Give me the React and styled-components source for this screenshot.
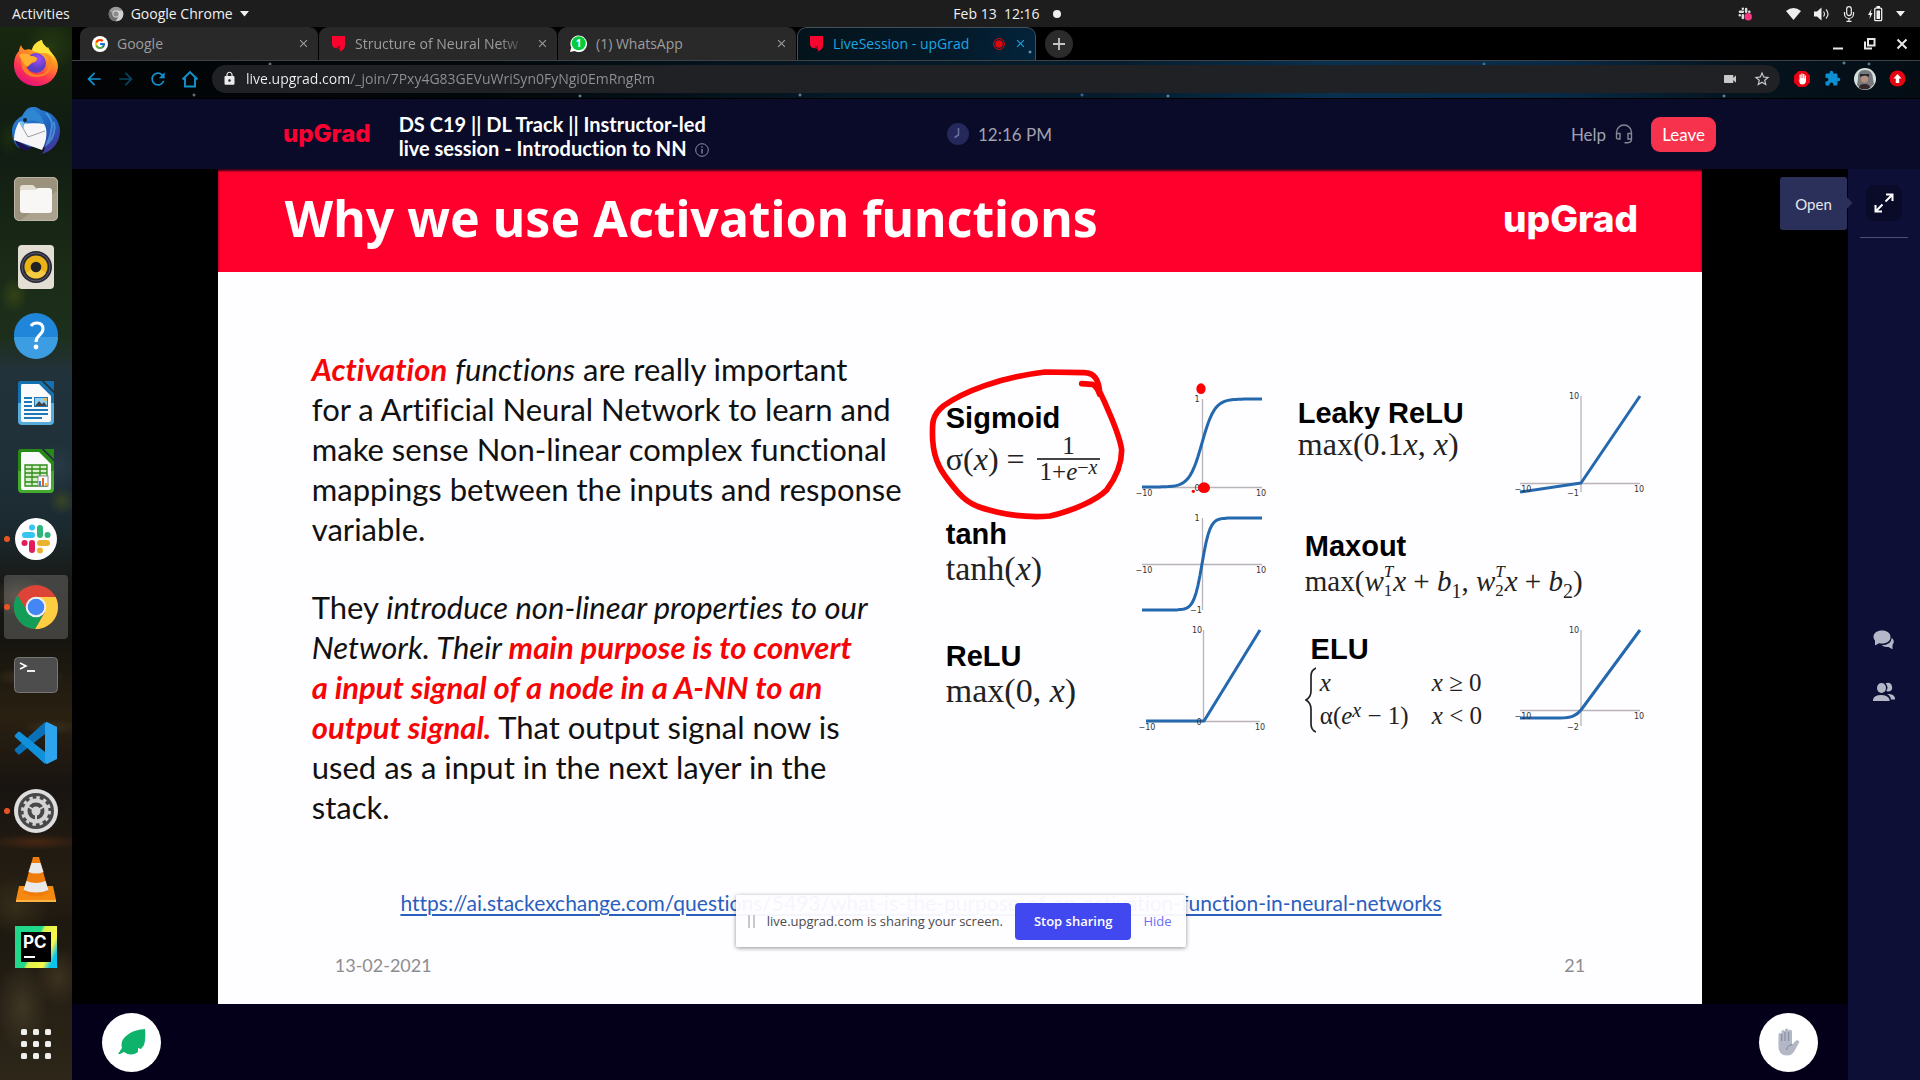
import React from "react";
import styled, { createGlobalStyle, css } from "styled-components";
import { FcGoogle } from "react-icons/fc";
import {
  MdArrowBack,
  MdArrowForward,
  MdRefresh,
  MdLock,
  MdVideocam,
  MdStarBorder,
  MdExtension,
  MdClose,
} from "react-icons/md";

const ui = `"Open Sans", "Noto Sans", sans-serif`;
const lato = `Lato, "Open Sans", sans-serif`;

const Global = createGlobalStyle`
  *, *::before, *::after { box-sizing: border-box; }
  html, body, #root { height: 100%; }
  body { margin: 0; background: #000; font-family: ${ui}; font-variant-ligatures: none; overflow: hidden; }
  button { font: inherit; color: inherit; background: none; border: 0; padding: 0; }
  svg { display: block; flex: none; }
  p, h1, h2, h3 { margin: 0; }
`;

const Desktop = styled.div`
  display: grid;
  grid-template-rows: 27px minmax(0, 1fr);
  grid-template-columns: 72px minmax(0, 1fr);
  height: 100vh;
`;

/* ---------- GNOME top bar ---------- */
const TopBar = styled.header`
  grid-column: 1 / -1;
  display: grid;
  grid-template-columns: 1fr auto 1fr;
  align-items: center;
  background: #1d1d1d;
  color: #f0f0f0;
  font-size: 14px;
  line-height: 20px;
`;
const TopLeft = styled.div`
  display: flex;
  align-items: center;
  padding-left: 12px;
  gap: 38px;
`;
const TopItem = styled.button`
  display: flex;
  align-items: center;
  gap: 7px;
`;
const TopRight = styled.div`
  display: flex;
  align-items: center;
  justify-content: flex-end;
  gap: 13px;
  padding-right: 15px;
`;
const Clock = styled.button`
  display: flex;
  align-items: center;
  gap: 13px;
  padding-left: 94px;
  white-space: pre;
`;
const Dot = styled.span`
  width: 8px;
  height: 8px;
  border-radius: 50%;
  background: #f0f0f0;
`;

/* ---------- Dock ---------- */
const DockNav = styled.nav`
  display: flex;
  flex-direction: column;
  align-items: center;
  gap: 4px;
  padding: 4px;
  background:
    radial-gradient(ellipse 16px 20px at 10px 110px, #22380f99, transparent),
    radial-gradient(ellipse 26px 26px at 50px 20px, #2c4313aa, transparent),
    radial-gradient(ellipse 14px 18px at 14px 268px, #4a5a1280, transparent),
    radial-gradient(ellipse 14px 14px at 62px 474px, #4c561a90, transparent),
    radial-gradient(ellipse 22px 26px at 58px 440px, #33475866, transparent),
    radial-gradient(ellipse 30px 20px at 20px 570px, #5c4a3890, transparent),
    radial-gradient(ellipse 36px 10px at 30px 650px, #5a482a88, transparent),
    radial-gradient(ellipse 30px 8px at 52px 700px, #4d3f2588, transparent),
    radial-gradient(ellipse 50px 8px at 36px 815px, #5a2e12aa, transparent),
    radial-gradient(ellipse 34px 30px at 16px 880px, #40361faa, transparent),
    radial-gradient(ellipse 26px 46px at 22px 980px, #4b422caa, transparent),
    radial-gradient(ellipse 24px 30px at 58px 950px, #4b3d26aa, transparent),
    linear-gradient(#18280f 0, #101b12 110px, #1a2a16 230px, #1d2f1c 310px, #22323a 345px,
      #203039 440px, #1b2a30 500px, #191b18 550px, #15140f 610px, #292011 690px,
      #181411 760px, #261e12 860px, #1d1810 900px, #2d2619 100%);
`;
const DockItem = styled.button`
  position: relative;
  display: grid;
  place-items: center;
  width: 64px;
  height: 64px;
  border-radius: 4px;
  ${(p) => p.$active && css`background: #ffffff30;`}
  ${(p) => p.$last && css`margin-top: auto;`}
  ${(p) =>
    p.$running &&
    css`
      &::before {
        content: "";
        position: absolute;
        left: 0;
        top: 29px;
        width: 6px;
        height: 6px;
        border-radius: 50%;
        background: #e95420;
      }
    `}
`;

/* ---------- Browser chrome ---------- */
const Browser = styled.div`
  display: grid;
  grid-template-rows: 33px 39px minmax(0, 1fr);
  min-width: 0;
  min-height: 0;
`;
const sky = css`
  background:
    radial-gradient(circle 2px at 198px 3px, #8fb0b0, transparent),
    radial-gradient(circle 2px at 122px 34px, #8fa8a8, transparent),
    radial-gradient(circle 2px at 508px 35px, #8fb8c0, transparent),
    radial-gradient(circle 2px at 728px 34px, #8fb8d8, transparent),
    radial-gradient(circle 2px at 1096px 35px, #7fc0f0, transparent),
    radial-gradient(circle 2px at 1010px 34px, #4f90d0, transparent),
    radial-gradient(circle 2px at 1412px 3px, #3fa0d0, transparent),
    radial-gradient(circle 2px at 1652px 35px, #7fc0d0, transparent),
    radial-gradient(circle 2px at 1772px 2px, #7fc0d0, transparent),
    radial-gradient(circle 2px at 1797px 3px, #7fb0c0, transparent),
    linear-gradient(90deg, #020405 0, #03080b 420px, #051a28 800px, #061c2c 1040px, #08304f 1260px,
      #082a47 1480px, #05141f 1660px, #040d14 100%);
`;
const TabStrip = styled.div`
  display: flex;
  align-items: stretch;
  padding-left: 8px;
  background: #000;
`;
const Tab = styled.div`
  display: flex;
  align-items: center;
  width: 239px;
  padding: 0 9px 0 12px;
  gap: 9px;
  font-size: 14px;
  line-height: 20px;
  color: #9d9d9d;
  border-radius: 9px 9px 0 0;
  background: #292929;
  box-shadow: inset -1px 0 #000;
  ${(p) =>
    p.$active &&
    css`
      color: #18a8e4;
      background: radial-gradient(circle 2px at 233px 25px, #8fd0e8, transparent),
        linear-gradient(100deg, #04141c, #041827 60%, #03243c);
      box-shadow: inset 0 1px #46505a, inset -1px 0 #46505a, inset 1px 0 #46505a;
    `}
`;
const TabTitle = styled.span`
  flex: 1;
  min-width: 0;
  white-space: nowrap;
  ${(p) => p.$fade && css`mask-image: linear-gradient(90deg, #000 84%, transparent);`}
`;
const NewTab = styled.button`
  align-self: center;
  display: grid;
  place-items: center;
  width: 28px;
  height: 28px;
  margin-left: 9px;
  border-radius: 50%;
  background: #2b2b2b;
  color: #c4c4c4;
`;
const WindowButtons = styled.div`
  display: flex;
  align-items: center;
  gap: 20px;
  margin-left: auto;
  padding-right: 12px;
  color: #e8e8e8;
`;
const Toolbar = styled.div`
  display: flex;
  align-items: center;
  padding: 0 14px 2px 12px;
  ${sky}
  border-top: 1px solid #3d4347;
  border-bottom: 1px solid #000;
`;
const NavButtons = styled.div`
  display: flex;
  gap: 12px;
  margin-right: 12px;
  color: #1192d0;
`;
const NavButton = styled.button`
  opacity: ${(p) => (p.disabled ? 0.45 : 1)};
  color: inherit;
`;
const Omnibox = styled.form`
  display: flex;
  align-items: center;
  flex: 1;
  height: 28px;
  padding: 0 9px 0 10px;
  gap: 9px;
  border-radius: 14px;
  background: #202124;
  color: #c8c8c8;
`;
const UrlInput = styled.input`
  flex: 1;
  min-width: 0;
  padding: 0;
  border: 0;
  outline: 0;
  font-family: ${ui};
  font-size: 14px;
  line-height: 20px;
  color: transparent;
  background: linear-gradient(90deg, #f2f2f2 105px, #8f9194 105px);
  background-clip: text;
`;
const OmniActions = styled.div`
  display: flex;
  gap: 15px;
`;
const Extensions = styled.div`
  display: flex;
  align-items: center;
  gap: 13px;
  margin-left: 13px;
`;
const IconButton = styled.button`
  display: grid;
  place-items: center;
`;

/* ---------- Live session page ---------- */
const Page = styled.div`
  display: grid;
  grid-template-rows: 70px minmax(0, 1fr) 76px;
  grid-template-columns: minmax(0, 1fr) 72px;
  min-height: 0;
  background: #000;
`;
const SessionHeader = styled.header`
  grid-column: 1 / -1;
  display: grid;
  grid-template-columns: 1fr auto 1fr;
  align-items: center;
  padding: 0 204px 0 211px;
  background: #090b29;
  font-family: ${lato};
  color: #a0a1b0;
  font-size: 17px;
`;
const Brand = styled.div`
  display: flex;
  align-items: center;
  gap: 28px;
`;
const Logo = styled.span`
  font-family: Inter, ${ui};
  font-weight: 800;
  font-size: ${(p) => p.$size}px;
  line-height: 1;
  color: ${(p) => p.$color};
`;
const SessionTitle = styled.h1`
  padding-top: 3px;
  font-size: 20px;
  line-height: 24px;
  font-weight: 700;
  color: #fff;
  white-space: nowrap;
  svg { display: inline-block; margin-left: 8px; vertical-align: -1px; }
`;
const TimeBox = styled.div`
  display: flex;
  align-items: center;
  gap: 9px;
`;
const HeaderActions = styled.div`
  display: flex;
  justify-content: flex-end;
  align-items: center;
  gap: 18px;
`;
const HelpButton = styled.button`
  display: flex;
  align-items: center;
  gap: 9px;
`;
const LeaveButton = styled.button`
  height: 35px;
  padding: 0 11px;
  border-radius: 9px;
  background: #f7324c;
  color: #fff;
`;
const Stage = styled.main`
  position: relative;
  display: flex;
  justify-content: center;
  background: #000;
  min-height: 0;
`;
const SideRail = styled.aside`
  grid-row: 2 / 4;
  grid-column: 2;
  display: flex;
  flex-direction: column;
  align-items: center;
  padding-top: 16px;
  background: #0e0f36;
`;
const ExpandButton = styled.button`
  display: grid;
  place-items: center;
  width: 36px;
  height: 36px;
  border-radius: 8px;
  background: #090b29;
`;
const RailRule = styled.hr`
  width: 48px;
  height: 1px;
  margin: 16px 0 0;
  border: 0;
  background: #4c4f78;
`;
const RailTools = styled.div`
  display: flex;
  flex-direction: column;
  gap: 32px;
  margin: auto 0;
  padding-top: 14px;
  color: #b4b7c7;
`;
const Tooltip = styled.div`
  position: absolute;
  right: 1px;
  top: 8px;
  display: grid;
  place-items: center;
  width: 67px;
  height: 53px;
  border-radius: 3px;
  background: #2b305b;
  color: #e4e5ee;
  font-family: ${lato};
  font-size: 15px;
  &::after {
    content: "";
    position: absolute;
    right: -4px;
    top: 22px;
    width: 8px;
    height: 8px;
    background: #2b305b;
    transform: rotate(45deg);
  }
`;
const Footer = styled.footer`
  display: flex;
  align-items: center;
  justify-content: space-between;
  padding: 0 30px;
  background: #05001a;
`;
const RoundButton = styled.button`
  display: grid;
  place-items: center;
  width: 59px;
  height: 59px;
  border-radius: 50%;
  background: #fff;
`;

/* ---------- Shared slide ---------- */
const Slide = styled.article`
  position: relative;
  display: flex;
  flex-direction: column;
  height: 100%;
  aspect-ratio: 16 / 9;
  background: #fefdff;
  color: #111;
  font-family: ${lato};
`;
const SlideHead = styled.div`
  display: flex;
  align-items: center;
  justify-content: space-between;
  height: 103px;
  padding: 0 64px 5px 67px;
  background: #ff002d;
  box-shadow: inset 0 2px 2px #3c0016;
`;
const SlideTitle = styled.h2`
  font-family: "Noto Sans", sans-serif;
  font-size: 50px;
  line-height: 60px;
  color: #fff;
`;
const SlideBody = styled.div`
  display: grid;
  grid-template-columns: 634px 1fr;
  padding: 77px 0 0 94px;
  height: 616px;
`;
const Copy = styled.div`
  display: flex;
  flex-direction: column;
  gap: 38px;
  font-size: 31px;
  line-height: 40px;
  white-space: nowrap;
`;
const Key = styled.strong`
  font-style: italic;
  color: #f50505;
`;
const Functions = styled.div`
  position: relative;
  display: grid;
  grid-template-columns: 184px 168px 210px 145px;
  grid-template-rows: 120px 115px 120px;
  margin-top: 36px;
`;
const Fn = styled.section`
  padding-top: ${(p) => p.$top}px;
  padding-left: ${(p) => p.$indent || 0}px;
  grid-column: span ${(p) => p.$span || 1};
  white-space: nowrap;
`;
const FnName = styled.h3`
  font-family: "Liberation Sans", sans-serif;
  font-size: 29px;
  line-height: 32px;
  color: #000;
`;
const Formula = styled.div`
  display: flex;
  align-items: center;
  font-family: "Liberation Serif", serif;
  font-size: ${(p) => p.$size || 32}px;
  line-height: ${(p) => p.$line || 36}px;
  color: #222;
  white-space: pre;
  sub { font-size: 20px; line-height: 0; }
`;
const Fraction = styled.span`
  display: grid;
  justify-items: center;
  margin-left: 12px;
  font-size: 25px;
  line-height: 24px;
  > :first-child { justify-self: stretch; text-align: center; border-bottom: 2px solid #444; }
  > :last-child { padding: 0 3px; }
  sup { font-size: 20px; line-height: 0; vertical-align: 6px; }
`;
const Scripts = styled.span`
  display: inline-grid;
  font-size: 17px;
  line-height: 19px;
`;
const Cases = styled.div`
  display: grid;
  grid-template-columns: 15px 112px auto;
  padding-top: 2px;
  font-family: "Liberation Serif", serif;
  font-size: 25px;
  line-height: 31px;
  color: #222;
  svg { grid-row: 1 / 3; }
  sup { font-size: 20px; line-height: 0; vertical-align: 7px; }
`;
const Ink = styled.svg`
  position: absolute;
  left: -46px;
  top: -45px;
`;
const SourceLink = styled.a`
  align-self: center;
  margin-right: 78px;
  font-size: 21px;
  line-height: 30px;
  color: #2a5fbd;
  white-space: nowrap;
  text-decoration: underline;
  text-decoration-thickness: 2px;
  text-underline-offset: 3px;
`;
const SlideFoot = styled.div`
  display: flex;
  justify-content: space-between;
  margin-top: auto;
  padding: 0 117px 24px;
  font-size: 18px;
  line-height: 30px;
  color: #8d8d8f;
`;
const ShareBar = styled.div`
  position: absolute;
  left: 518px;
  bottom: 57px;
  display: flex;
  align-items: center;
  height: 52px;
  padding: 0 14px 0 12px;
  gap: 12px;
  border-radius: 2px;
  background: #fefdfff4;
  box-shadow: 0 1px 4px #00000070;
  font-family: ${ui};
  font-size: 13px;
  color: #4a4a4c;
  white-space: nowrap;
`;
const Grip = styled.span`
  width: 7px;
  height: 13px;
  border: solid #c8c8cc;
  border-width: 0 2px;
`;
const StopButton = styled.button`
  height: 37px;
  padding: 0 19px;
  border-radius: 4px;
  background: #4248f0;
  color: #fff;
  font-weight: 600;
`;
const HideButton = styled.button`
  color: #6c6ff2;
`;

const axis = { stroke: "#b9b4b9", strokeWidth: 1.3, fill: "none" };
const curve = { stroke: "#2468ad", strokeWidth: 3, fill: "none", strokeLinejoin: "round" };

function Chart({ height = 120, axes, line, ticks }) {
  return (
    <svg width="145" height={height} viewBox={`0 0 145 ${height}`} aria-hidden="true">
      <path d={axes} {...axis} />
      <path d={line} {...curve} />
      {ticks.map(([x, y, t]) => (
        <text key={`${x}-${y}`} x={x} y={y} fontSize="8" textAnchor="middle" fill="#333" fontFamily="DejaVu Sans">
          {t}
        </text>
      ))}
    </svg>
  );
}

const sample = (fn, x0, x1, mid) => {
  const pts = [];
  for (let i = 0; i <= 60; i++) {
    const x = -10 + i / 3;
    pts.push(`${(x0 + ((x1 - x0) * i) / 60).toFixed(1)} ${(mid - fn(x)).toFixed(1)}`);
  }
  return "M" + pts.join("L");
};
const sigmoidLine = sample((x) => 88 / (1 + Math.exp(-x * 0.95)), 12, 132, 102);
const tanhLine = sample((x) => 46 * Math.tanh(x * 0.75), 12, 132, 59);

/* ---------- Dock icons ---------- */
const Svg48 = (p) => <svg width="48" height="48" viewBox="0 0 48 48" aria-hidden="true">{p.children}</svg>;

const Firefox = () => (
  <Svg48>
    <defs>
      <linearGradient id="ff1" x1=".8" y1="0" x2=".3" y2="1">
        <stop offset="0" stopColor="#fff44f" /><stop offset=".35" stopColor="#ff9a1f" />
        <stop offset=".7" stopColor="#ff3750" /><stop offset="1" stopColor="#e3107a" />
      </linearGradient>
      <radialGradient id="ff2" cx=".6" cy=".3"><stop offset="0" stopColor="#a34bf5" /><stop offset="1" stopColor="#5a3fc4" /></radialGradient>
    </defs>
    <path d="M9 6c1 3 2 4 4 5 2-1 5-1 7 0 2-6 6-9 10-10 0 4 2 6 5 8l1-1c2 3 2 5 2 6 5 2 8 8 8 14-1 11-10 19-22 19S2 38 2 26C2 18 5 14 7 12c0-2 1-4 2-6z" fill="url(#ff1)" />
    <circle cx="24" cy="24" r="10" fill="url(#ff2)" />
    <path d="M9 18c3-2 9-1 11 1 1 1 4 1 5 2-1 3-4 2-6 4-2 1-2 3-5 3 3 6 9 9 16 7 5-2 8-7 7-13-1-5-4-7-8-8 5 0 10 3 11 9 1 9-6 15-16 15S8 31 9 18z" fill="#ff8a1c" opacity=".85" />
    <path d="M20 11c1-6 6-9 10-10 0 6 10 9 13 19-4-5-7-6-12-6s-7 0-11-3z" fill="#ffe23c" />
    <path d="M7 16c3-2 8-2 12 1 3 0 6 1 6 3-1 3-4 2-6 4-1 1-2 3-5 3-3-3-5-7-7-11z" fill="#ffb02e" />
  </Svg48>
);
const Thunderbird = () => (
  <Svg48>
    <defs><linearGradient id="tb" x2=".6" y2="1"><stop stopColor="#2f8fdd" /><stop offset=".6" stopColor="#1f62bd" /><stop offset="1" stopColor="#3d3aa0" /></linearGradient></defs>
    <path d="M10 9C13 4 15 0 21 0c5 0 6 2 8 3 11 2 18 9 19 20 0 12-7 21-18 24 3-4 3-6 2-8L7 41C2 37 0 31 0 24 0 18 3 13 10 9z" fill="url(#tb)" />
    <path d="M3 33l16 8c-2 3-8 4-12-1-2-2-3-4-4-7z" fill="#1c1250" />
    <path d="M7 15c5 3 18 0 25 2 4 5 3 17-2 26L2 33c0-7 2-13 5-18z" fill="#f6f6f8" />
    <path d="M8 16l8 14 17-6" fill="none" stroke="#9c9ca4" />
    <path d="M9 16c0-6 4-12 11-14 7 4 11 8 12 15-8-4-15-5-19-1-1 1-1 3-3 4z" fill="#2f86d3" />
    <path d="M8 14c0 3 1 6 4 7 0-2-1-4 0-6z" fill="#7cc4ee" />
    <circle cx="13" cy="13" r="2" fill="#123" />
    <path d="M34 6c6 5 7 12 5 19-1 5-3 9-4 12 6-5 9-14 7-22" fill="none" stroke="#58b2ee" strokeWidth="2" opacity=".6" />
  </Svg48>
);
const Files = () => (
  <Svg48>
    <rect x="2" y="2" width="44" height="44" rx="5" fill="#9b927e" />
    <path d="M46 15v26a5 5 0 0 1-5 5H8z" fill="#aaa18e" />
    <rect x="2.5" y="2.5" width="43" height="43" rx="5" fill="none" stroke="#bcb5a6" />
    <path d="M8 13q0-3 3-3h10l4 4h12v5H8z" fill="#e4dfd3" />
    <path d="M8 17q0-2 2-2h13l3-2h11q3 0 3 3v19q0 3-3 3H11q-3 0-3-3z" fill="#f8f7f5" />
  </Svg48>
);
const Music = () => (
  <Svg48>
    <rect x="6" y="2" width="36" height="44" rx="4" fill="#e3ded4" />
    <circle cx="24" cy="24" r="16" fill="#2a2a36" />
    <circle cx="24" cy="24" r="14" fill="none" stroke="#5d5b6c" />
    <circle cx="24" cy="24" r="11.5" fill="#eab417" />
    <path d="M14 30a12 12 0 0 0 20 0l-10-6z" fill="#f6cf4f" opacity=".8" />
    <circle cx="24" cy="24" r="5.3" fill="#222" />
  </Svg48>
);
const HelpIcon = () => (
  <Svg48>
    <circle cx="24" cy="24" r="22" fill="#1f86da" />
    <path d="M2 26h44a22 22 0 0 1-44 0z" fill="#3d9de2" />
    <path d="M19 15c1-2 3-3 6-3 4 0 6 2 6 6 0 6-7 6-7 13" fill="none" stroke="#fff" strokeWidth="3" />
    <circle cx="24" cy="36" r="2.4" fill="#fff" />
  </Svg48>
);
const Doc = ({ dark, light, children }) => (
  <Svg48>
    <path d="M10 2h19l13 13v27a4 4 0 0 1-4 4H10a4 4 0 0 1-4-4V6a4 4 0 0 1 4-4z" fill={light} />
    <path d="M10 2h19l13 13v9H6V6a4 4 0 0 1 4-4z" fill={dark} />
    <path d="M10 5h17l12 12v24q0 2-2 2H11q-2 0-2-2V7q0-2 1-2z" fill="#fafafa" />
    <path d="M32 2h10v10z" fill={dark} />
    {children}
  </Svg48>
);
const Writer = () => (
  <Doc dark="#1470ae" light="#58acdc">
    <path d="M12 19h8M12 23h8M12 27h8M12 31h24M12 35h24M12 39h18" stroke="#1d78b8" strokeWidth="1.8" />
    <rect x="22" y="18" width="14" height="10" fill="#1d78b8" />
    <rect x="23" y="19" width="12" height="8" fill="#8fd0f0" />
    <path d="M23 27l4-5 3 3 2-2 3 4z" fill="#444" />
    <circle cx="33.500" cy="20.500" r="1.500" fill="#f5b52a" />
  </Doc>
);
const Calc = () => (
  <Doc dark="#288a16" light="#43ac2e">
    <rect x="13" y="18" width="22" height="21" fill="#d8f0c8" />
    <path d="M13 18h22v21H13zM20 18v21M28 18v21M13 22h22M13 26h22M13 30h22M13 35h22" fill="none" stroke="#2e8b1c" strokeWidth="1.3" />
    <rect x="26" y="29" width="10" height="10" fill="#fff" stroke="#888" />
    <path d="M28 39v-5" stroke="#2e8fd0" strokeWidth="2" /><path d="M31 39v-8" stroke="#e0642a" strokeWidth="2" />
    <path d="M34 39v-3" stroke="#f0b52a" strokeWidth="2" />
  </Doc>
);
const slackShape = (
  <g strokeWidth="6" strokeLinecap="round" fill="none">
    <path d="M13 20h7" stroke="#36c5f0" /><path d="M28 13v7" stroke="#2eb67d" />
    <path d="M28 28h7" stroke="#ecb22e" /><path d="M20 28v7" stroke="#e01e5a" />
    <path d="M20 12.500v.1" stroke="#36c5f0" /><path d="M35.500 20h.1" stroke="#2eb67d" />
    <path d="M28 35.500v.1" stroke="#ecb22e" /><path d="M12.500 28h.1" stroke="#e01e5a" />
  </g>
);
const Slack = () => (
  <Svg48><circle cx="24" cy="24" r="21" fill="#fff" />{slackShape}</Svg48>
);
const ChromeIcon = ({ size = 48, grey }) => {
  const c = grey ? ["#9a9a9a", "#d0d0d0", "#707070", "#8c8c8c", "#eee"] : ["#dd4437", "#fecd41", "#129d58", "#4486f4", "#f1f1f1"];
  return (
    <svg width={size} height={size} viewBox="0 0 48 48" aria-hidden="true">
      <circle cx="24" cy="24" r="22" fill={c[0]} />
      <path d="M24 14h19.600A22 22 0 0 1 23 46l10-17z" fill={c[1]} />
      <path d="M5.500 12A22 22 0 0 0 23 46l9.500-16.500-17-1z" fill={c[2]} />
      <circle cx="24" cy="24" r="10.300" fill={c[4]} />
      <circle cx="24" cy="24" r="8.300" fill={c[3]} />
    </svg>
  );
};
const Terminal = () => (
  <Svg48>
    <rect x="2.500" y="6.500" width="43" height="35" rx="4" fill="#4d4d4d" stroke="#777" />
    <path d="M8 12l6 3-6 3" fill="none" stroke="#fff" strokeWidth="1.600" /><path d="M15 20h8" stroke="#fff" strokeWidth="1.800" />
  </Svg48>
);
const Code = () => (
  <Svg48>
    <path d="M3 32q-1-1 0-2L33 3v12L8 35q-1 1-2 0z" fill="#0a71b8" />
    <path d="M3 16q-1 1 0 2l30 27V33L8 13q-1-1-2 0z" fill="#1190db" />
    <path d="M35 3l10 5v32l-10 5q-2 0-2-2V5q0-2 2-2z" fill="#2ea3ee" />
  </Svg48>
);
const Settings = () => (
  <Svg48>
    <circle cx="24" cy="24" r="22" fill="#dedede" /><circle cx="24" cy="24" r="18" fill="#484848" />
    <circle cx="24" cy="24" r="13.500" fill="none" stroke="#d4d4d4" strokeWidth="3" strokeDasharray="3.400 3.670" />
    <circle cx="24" cy="24" r="10.500" fill="none" stroke="#d4d4d4" strokeWidth="4" />
    <path d="M24 24V34M24 24l9-5M24 24l-9-5" stroke="#d4d4d4" strokeWidth="2" /><circle cx="24" cy="24" r="4.500" fill="#d4d4d4" />
  </Svg48>
);
const Vlc = () => (
  <Svg48>
    <path d="M7 31h34l3 14v2H4v-2z" fill="#f68a10" /><path d="M4 45h40v2H4z" fill="#ffb347" />
    <path d="M21 2h6l10 36q-13 7-26 0z" fill="#ef7d0c" />
    <path d="M19.500 8h9l3 9q-7 3-15 0z" fill="#e9e9e9" /><path d="M14.500 26q9 4 19 0l3 9q-12 5-25 0z" fill="#e9e9e9" />
  </Svg48>
);
const PcFrame = styled.div`
  width: 42px;
  height: 42px;
  padding: 6px;
  background: linear-gradient(115deg, #21d789 45%, #d9f24a 50%, #fcf84a 75%, #07c3f2 88%);
`;
const PcInner = styled.div`
  height: 30px;
  padding-left: 2px;
  text-align: left;
  background: linear-gradient(#fff, #fff) 3px 24px / 11px 2px no-repeat #000;
  color: #fff;
  font: 700 17px/20px Inter, sans-serif;
`;
const Apps = () => (
  <Svg48>
    {[0, 1, 2].flatMap((r) => [0, 1, 2].map((c) => (
      <rect key={`${r}${c}`} x={9 + c * 12} y={9 + r * 12} width="6" height="6" rx="1.500" fill="#efefec" />
    )))}
  </Svg48>
);

const dock = [
  { name: "Firefox", icon: <Firefox /> },
  { name: "Thunderbird", icon: <Thunderbird /> },
  { name: "Files", icon: <Files /> },
  { name: "Rhythmbox", icon: <Music /> },
  { name: "Help", icon: <HelpIcon /> },
  { name: "Writer", icon: <Writer /> },
  { name: "Calc", icon: <Calc /> },
  { name: "Slack", icon: <Slack />, running: true },
  { name: "Chrome", icon: <ChromeIcon />, running: true, active: true },
  { name: "Terminal", icon: <Terminal /> },
  { name: "Code", icon: <Code /> },
  { name: "Settings", icon: <Settings />, running: true },
  { name: "VLC", icon: <Vlc /> },
  { name: "PyCharm", icon: <PcFrame><PcInner>PC</PcInner></PcFrame> },
];

const UpgradFavicon = () => (
  <svg width="15" height="16" viewBox="0 0 15 16" aria-hidden="true">
    <path d="M1 0h13v9c0 4-3 6-6 6.500 2-1 1-3-1-3.200C3 12.500 1 11 1 8z" fill="#f8052f" />
    <path d="M5 10q3 2 4-1v3q-2 1-4-2z" fill="#8c0820" />
  </svg>
);
const GoogleFavicon = () => (
  <svg width="16" height="16" viewBox="0 0 16 16" aria-hidden="true">
    <circle cx="8" cy="8" r="8" fill="#fff" />
    <FcGoogle x="2" y="2" width="12" height="12" size={12} />
  </svg>
);
const WhatsappFavicon = () => (
  <svg width="17" height="17" viewBox="0 0 17 17" aria-hidden="true">
    <path d="M0 17l1.300-4.400A8.300 8.300 0 1 1 4.500 16z" fill="#fff" />
    <circle cx="8.700" cy="8.200" r="7" fill="#04cc3d" />
    <text x="8.700" y="12" fontSize="10" fontWeight="700" fill="#fff" textAnchor="middle" fontFamily="Open Sans">1</text>
  </svg>
);
const Record = () => (
  <svg width="12" height="12" viewBox="0 0 12 12" aria-hidden="true">
    <circle cx="6" cy="6" r="5.400" fill="none" stroke="#e0080f" /><circle cx="6" cy="6" r="3.800" fill="#e0080f" />
  </svg>
);

export default function App() {
  return (
    <Desktop>
      <Global />
      <TopBar>
        <TopLeft>
          <TopItem>Activities</TopItem>
          <TopItem>
            <ChromeIcon size={16} grey />
            Google Chrome
            <svg width="9" height="6" viewBox="0 0 9 6"><path d="M0 0h9L4.500 5.500z" fill="#f0f0f0" /></svg>
          </TopItem>
        </TopLeft>
        <Clock>Feb 13  12:16<Dot /></Clock>
        <TopRight>
          <svg width="15" height="15" viewBox="6 6 36 36">
            <g strokeWidth="6" strokeLinecap="round" stroke="#ddd">
              <path d="M13 20h7M28 13v7M28 28h7M20 28v7M20 12.500v.1M35.500 20h.1M12.500 28h.1" />
            </g>
            <circle cx="33" cy="32" r="9" fill="#f5377f" />
          </svg>
          <svg width="36" height="14" viewBox="0 0 36 14"><path d="M21 4Q28.500-2 36 4l-7.500 9z" fill="#f0f0f0" /></svg>
          <svg width="16" height="14" viewBox="0 0 16 14"><path d="M0 4.500h3L7.500.5v13L3 9.500H0z" fill="#f0f0f0" /><path d="M9.500 4.500q2 2.500 0 5M12 2.500q4 4.500 0 9" fill="none" stroke="#ddd" strokeWidth="1.200" /></svg>
          <svg width="12" height="16" viewBox="0 0 12 16"><rect x="3.700" y=".6" width="4.600" height="9" rx="2.300" fill="none" stroke="#eee" strokeWidth="1.200" /><path d="M1.500 6v2a4.500 4.500 0 0 0 9 0V6M6 12.500V15M3.500 15.400h5" fill="none" stroke="#eee" strokeWidth="1.200" /></svg>
          <svg width="15" height="16" viewBox="0 0 15 16"><path d="M3.500 3L0 9h2l-.5 4L4.500 7H2.700z" fill="#f0f0f0" /><rect x="6.700" y="2.200" width="7" height="12.500" rx="1" fill="none" stroke="#f0f0f0" strokeWidth="1.300" /><path d="M8.500 0h3.500v2H8.500zM8.500 4.500h3.500v8.500H8.500z" fill="#f0f0f0" /></svg>
          <svg width="9" height="6" viewBox="0 0 9 6"><path d="M0 0h9L4.500 5.500z" fill="#f0f0f0" /></svg>
        </TopRight>
      </TopBar>

      <DockNav aria-label="Dock">
        {dock.map((d) => (
          <DockItem key={d.name} aria-label={d.name} $running={d.running} $active={d.active}>{d.icon}</DockItem>
        ))}
        <DockItem aria-label="Show applications" $last><Apps /></DockItem>
      </DockNav>

      <Browser>
        <TabStrip>
          <Tab>
            <GoogleFavicon />
            <TabTitle>Google</TabTitle>
            <IconButton aria-label="Close tab"><MdClose size={13} /></IconButton>
          </Tab>
          <Tab>
            <UpgradFavicon />
            <TabTitle $fade>Structure of Neural Netw</TabTitle>
            <IconButton aria-label="Close tab"><MdClose size={13} /></IconButton>
          </Tab>
          <Tab>
            <WhatsappFavicon />
            <TabTitle>(1) WhatsApp</TabTitle>
            <IconButton aria-label="Close tab"><MdClose size={13} /></IconButton>
          </Tab>
          <Tab $active>
            <UpgradFavicon />
            <TabTitle>LiveSession - upGrad</TabTitle>
            <Record />
            <IconButton aria-label="Close tab"><MdClose size={13} /></IconButton>
          </Tab>
          <NewTab aria-label="New tab">
            <svg width="12" height="12" viewBox="0 0 12 12"><path d="M6 0v12M0 6h12" stroke="currentColor" strokeWidth="1.800" /></svg>
          </NewTab>
          <WindowButtons>
            <IconButton aria-label="Minimize"><svg width="12" height="12" viewBox="0 0 12 12"><path d="M1 10.500h10" stroke="currentColor" strokeWidth="2" /></svg></IconButton>
            <IconButton aria-label="Restore"><svg width="12" height="12" viewBox="0 0 12 12"><path d="M4 1h6.500v6.500H4zM1 3.500V10.500h7" fill="none" stroke="currentColor" strokeWidth="2" /></svg></IconButton>
            <IconButton aria-label="Close"><svg width="12" height="12" viewBox="0 0 12 12"><path d="M1.500 1.500l9 9M10.500 1.500l-9 9" stroke="currentColor" strokeWidth="2" /></svg></IconButton>
          </WindowButtons>
        </TabStrip>

        <Toolbar>
          <NavButtons>
            <NavButton aria-label="Back"><MdArrowBack size={20} /></NavButton>
            <NavButton aria-label="Forward" disabled><MdArrowForward size={20} /></NavButton>
            <NavButton aria-label="Reload"><MdRefresh size={20} /></NavButton>
            <NavButton aria-label="Home">
              <svg width="20" height="20" viewBox="0 0 20 20"><path d="M2.500 10.500L10 3l7.500 7.500M5 9v8.500h10V9" fill="none" stroke="currentColor" strokeWidth="1.900" /></svg>
            </NavButton>
          </NavButtons>
          <Omnibox>
            <MdLock size={15} color="#ececec" />
            <UrlInput aria-label="Address" defaultValue="live.upgrad.com/_join/7Pxy4G83GEVuWriSyn0FyNgi0EmRngRm" />
            <OmniActions>
              <IconButton type="button" aria-label="Camera"><MdVideocam size={16} /></IconButton>
              <IconButton type="button" aria-label="Bookmark"><MdStarBorder size={18} /></IconButton>
            </OmniActions>
          </Omnibox>
          <Extensions>
            <IconButton aria-label="Ad blocker">
              <svg width="18" height="18" viewBox="0 0 18 18"><path d="M5.500 1h7L17 5.500v7L12.500 17h-7L1 12.500v-7z" fill="#ea0010" /><path d="M5 9l1.500 2V4.500h1.300V8h.5V3.500h1.300V8h.5V4h1.300v4.500h.4V5.500h1.200V11q-.5 3.500-3.500 3.500T6.500 12z" fill="#fff" /></svg>
            </IconButton>
            <IconButton aria-label="Extensions"><MdExtension size={17} color="#0e8fd2" /></IconButton>
            <IconButton aria-label="Profile">
              <svg width="22" height="22" viewBox="0 0 22 22">
                <circle cx="11" cy="11" r="11" fill="#d5e0dc" /><path d="M4 11q-1-9 7-9t8 9l1 5-4 4H6l-3-3z" fill="#77797d" />
                <circle cx="10.500" cy="11" r="3.600" fill="#b58f7c" /><path d="M6 9q5-3 9 0V6H6z" fill="#24262e" /><path d="M5 20q0-4 5.500-4t5.500 4q-5 3-11 0z" fill="#34262a" />
              </svg>
            </IconButton>
            <IconButton aria-label="Update">
              <svg width="17" height="17" viewBox="0 0 17 17"><circle cx="8.500" cy="8.500" r="8" fill="#e40613" /><path d="M8.500 4l4 4.500h-2.300V13H6.800V8.500H4.500z" fill="#fff" /></svg>
            </IconButton>
          </Extensions>
        </Toolbar>

        <Page>
          <SessionHeader>
            <Brand>
              <Logo $size={24} $color="#fb0032">upGrad</Logo>
              <SessionTitle>
                DS C19 || DL Track || Instructor-led<br />live session - Introduction to NN
                <svg width="14" height="14" viewBox="0 0 14 14"><circle cx="7" cy="7" r="6.300" fill="none" stroke="#8d8ea2" /><path d="M7 6v4.500M7 3.300v1.400" stroke="#8d8ea2" strokeWidth="1.300" /></svg>
              </SessionTitle>
            </Brand>
            <TimeBox>
              <svg width="22" height="22" viewBox="0 0 22 22"><circle cx="11" cy="11" r="11" fill="#24285a" /><path d="M11.500 5v7l-4 2.500" fill="none" stroke="#6c70a4" strokeWidth="1.500" /></svg>
              12:16 PM
            </TimeBox>
            <HeaderActions>
              <HelpButton>
                Help
                <svg width="18" height="20" viewBox="0 0 18 20"><path d="M1.500 11V8.500a7.500 7.500 0 0 1 15 0v7q0 3-4 3.200H9.500M1.500 9.500H5V15H3q-1.500 0-1.500-1.500zM16.500 9.500H13V15h3.500" fill="none" stroke="#858798" strokeWidth="1.400" /></svg>
              </HelpButton>
              <LeaveButton>Leave</LeaveButton>
            </HeaderActions>
          </SessionHeader>

          <Stage>
            <Slide>
              <SlideHead>
                <SlideTitle>Why we use Activation functions</SlideTitle>
                <Logo $size={37} $color="#fff">upGrad</Logo>
              </SlideHead>
              <SlideBody>
                <Copy>
                  <p>
                    <Key>Activation</Key> <em>functions</em> are really important<br />
                    for a Artificial Neural Network to learn and<br />
                    make sense Non-linear complex functional<br />
                    mappings between the inputs and response<br />
                    variable.
                  </p>
                  <p>
                    They <em>introduce non-linear properties to our<br />
                    Network. Their </em><Key>main purpose is to convert<br />
                    a input signal of a node in a A-NN to an<br />
                    output signal.</Key> That output signal now is<br />
                    used as a input in the next layer in the<br />
                    stack.
                  </p>
                </Copy>
                <Functions>
                  <Fn $top={17}>
                    <FnName>Sigmoid</FnName>
                    <Formula $line={48}>
                      <span>σ(<i>x</i>) =</span>
                      <Fraction><span>1</span><span>1+<i>e</i><sup>−<i>x</i></sup></span></Fraction>
                    </Formula>
                  </Fn>
                  <Chart
                    axes="M12 102.500H132M72.500 14v92"
                    line={sigmoidLine}
                    ticks={[[67, 17, "1"], [14, 111, "−10"], [131, 111, "10"], [67, 106, "0"]]}
                  />
                  <Fn $top={12}>
                    <FnName>Leaky ReLU</FnName>
                    <Formula $line={30}><span>max(0.1<i>x</i>, <i>x</i>)</span></Formula>
                  </Fn>
                  <Chart
                    axes="M12 98.500H132M73 11v96"
                    line="M12 107L73 98L132 11"
                    ticks={[[66, 14, "10"], [15, 107, "−10"], [131, 107, "10"], [65, 111, "−1"]]}
                  />

                  <Fn $top={13}>
                    <FnName>tanh</FnName>
                    <Formula $size={34} $line={38}><span>tanh(<i>x</i>)</span></Formula>
                  </Fn>
                  <Chart
                    height={115}
                    axes="M12 59.500H132M72.500 13v92"
                    line={tanhLine}
                    ticks={[[67, 16, "1"], [14, 68, "−10"], [131, 68, "10"], [66, 108, "−1"]]}
                  />
                  <Fn $top={25} $indent={7} $span={2}>
                    <FnName>Maxout</FnName>
                    <Formula $size={29} $line={30}>
                      <span>max(<i>w</i></span><Scripts><i>T</i><span>1</span></Scripts>
                      <span><i>x</i> + <i>b</i><sub>1</sub>, <i>w</i></span>
                      <Scripts><i>T</i><span>2</span></Scripts>
                      <span><i>x</i> + <i>b</i><sub>2</sub>)</span>
                    </Formula>
                  </Fn>

                  <Fn $top={20}>
                    <FnName>ReLU</FnName>
                    <Formula $size={34} $line={38}><span>max(0, <i>x</i>)</span></Formula>
                  </Fn>
                  <Chart
                    axes="M16 101.500H130M73.500 10v92"
                    line="M16 101H74L130 10"
                    ticks={[[67, 13, "10"], [17, 110, "−10"], [130, 110, "10"], [69, 105, "0"]]}
                  />
                  <Fn $top={13} $indent={7}>
                    <FnName>&thinsp;ELU</FnName>
                    <Cases>
                      <svg width="11" height="66" viewBox="0 0 11 66"><path d="M11 1Q6 3 6 9v15q0 6-5 9 5 3 5 9v15q0 6 5 8" fill="none" stroke="#222" strokeWidth="1.700" /></svg>
                      <i>x</i><span><i>x</i> ≥ 0</span>
                      <span>α(<i>e</i><sup><i>x</i></sup> − 1)</span><span><i>x</i> &lt; 0</span>
                    </Cases>
                  </Fn>
                  <Chart
                    axes="M12 90.500H132M73 10v96"
                    line="M12 98H52C64 98 69 95 73 90L132 10"
                    ticks={[[66, 13, "10"], [15, 99, "−10"], [131, 99, "10"], [65, 110, "−2"]]}
                  />
                  <Ink width="400" height="200" viewBox="0 0 1200 600" aria-hidden="true">
                    <path
                      d="M545 131l32 2q14 6 22 30C598 118 582 97 550 98L435 96C300 112 190 155 130 198C95 226 96 250 98 300C102 370 132 405 160 440C200 492 230 502 290 516C340 528 400 532 450 528C520 512 590 480 620 450C650 410 665 370 665 330C660 285 612 180 592 140"
                      fill="none" stroke="#fb0203" strokeWidth="17" strokeLinecap="round" strokeLinejoin="round"
                    />
                    <ellipse cx="903" cy="146" rx="14" ry="16" fill="#fb0203" />
                    <ellipse cx="912" cy="443" rx="18" ry="16" fill="#fb0203" />
                    <circle cx="880" cy="454" r="5" fill="#fb0203" />
                  </Ink>
                </Functions>
              </SlideBody>
              <SourceLink href="#source">
                https://ai.stackexchange.com/questions/5493/what-is-the-purpose-of-an-activation-function-in-neural-networks
              </SourceLink>
              <SlideFoot><span>13-02-2021</span><span>21</span></SlideFoot>
              <ShareBar>
                <Grip />
                live.upgrad.com is sharing your screen.
                <StopButton>Stop sharing</StopButton>
                <HideButton>Hide</HideButton>
              </ShareBar>
            </Slide>
            <Tooltip role="tooltip">Open</Tooltip>
          </Stage>

          <SideRail>
            <ExpandButton aria-label="Open panel">
              <svg width="20" height="20" viewBox="0 0 20 20"><path d="M12 1.500h6.500V8M18 2l-6.500 6.500M8 18.500H1.500V12M2 18l6.500-6.500" fill="none" stroke="#fff" strokeWidth="2" /></svg>
            </ExpandButton>
            <RailRule />
            <RailTools>
              <IconButton aria-label="Chat">
                <svg width="22" height="20" viewBox="0 0 22 20" fill="currentColor">
                  <path d="M2 15.500V10.500Q.5 9 .5 7C.5 3 4 .5 9 .5S17.500 3 17.500 7 14 13.500 9 13.500Q7 13.500 6 13.300z" />
                  <path d="M18.700 8Q21.500 10 20.500 13l-1 2v4.300L15.500 17Q11 17.500 8.500 15.300 18 15.500 18.700 8z" />
                </svg>
              </IconButton>
              <IconButton aria-label="Participants">
                <svg width="22" height="20" viewBox="0 0 22 20" fill="currentColor">
                  <ellipse cx="8.500" cy="6" rx="4.500" ry="5" /><path d="M0 19v-1.500Q1 13 8 13t8.500 4.500V19z" />
                  <path d="M12.500 1.300Q18-.5 19 4.500t-4 5q-1.200 0-1.800-.8 3-3.500-.7-7.400zM14 12q7-.5 8 4v1.500h-4q-.3-3.500-4-5.500z" />
                </svg>
              </IconButton>
            </RailTools>
          </SideRail>

          <Footer>
            <RoundButton aria-label="Reactions">
              <svg width="28" height="26" viewBox="0 0 28 26"><path d="M27 0q1 10-1 16l-3 4-3-1v4q-7 5-14 0l-4 2H0l4-6q-2-7 4-12Q14 1 27 0z" fill="#0fb26b" /></svg>
            </RoundButton>
            <RoundButton aria-label="Raise hand">
              <svg width="24" height="28" viewBox="0 0 24 28">
                <path d="M1.500 6.500q0-1.500 1.500-1.500t1.500 1V3.500Q4.500 2 6 2t2 1.500V2q0-1.500 1.700-1.500T11.500 2v1q.3-1.200 1.800-1.200T15 3.500V17l3-3.500q2-2 4-.5 1 1-.5 2.500L18 22q-2.500 5.500-8 5.500-8.500 0-8.500-9z" fill="#b3b7c6" />
                <path d="M4.700 6v7M8 4v9M11.700 4v9M9.500 22q1-5 6-5.500" fill="none" stroke="#80859a" />
              </svg>
            </RoundButton>
          </Footer>
        </Page>
      </Browser>
    </Desktop>
  );
}
